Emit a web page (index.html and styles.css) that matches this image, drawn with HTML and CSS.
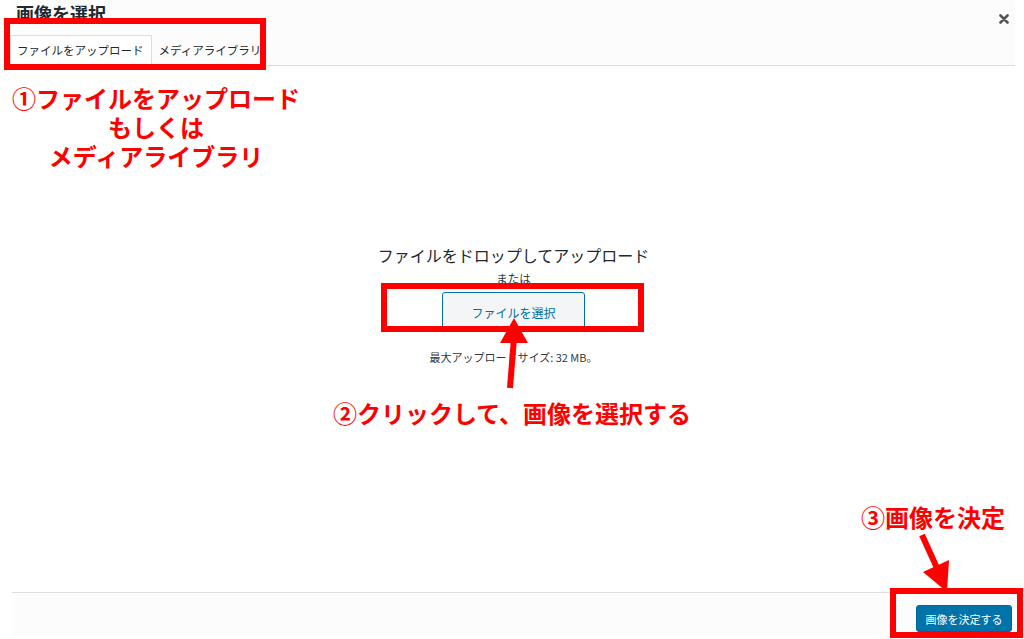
FILE: index.html
```html
<!DOCTYPE html>
<html lang="ja">
<head>
<meta charset="utf-8">
<title>画像を選択</title>
<link rel="stylesheet" href="styles.css">
</head>
<body>
<div class="modal">
  <header class="modal-header">
    <div class="title-row">
      <h1 class="title">画像を選択</h1>
      <button class="close" aria-label="閉じる">
        <svg width="10" height="10" viewBox="0 0 10 10"><path d="M1.5 1.5 L8.5 8.5 M8.5 1.5 L1.5 8.5" stroke="#555" stroke-width="2.6" stroke-linecap="round"/></svg>
      </button>
    </div>
    <nav class="tabs">
      <span class="tab active">ファイルをアップロード</span>
      <span class="tab">メディアライブラリ</span>
    </nav>
  </header>
  <main class="modal-body">
    <div class="uploader">
      <p class="drop">ファイルをドロップしてアップロード</p>
      <p class="or">または</p>
      <button class="select-btn">ファイルを選択</button>
      <p class="max">最大アップロードサイズ: 32 MB。</p>
    </div>
  </main>
  <footer class="modal-footer">
    <button class="primary">画像を決定する</button>
  </footer>
</div>

<div class="note note1">
  <div class="note-line">①ファイルをアップロード</div>
  <div class="note-line">もしくは</div>
  <div class="note-line">メディアライブラリ</div>
</div>
<div class="note note2">②クリックして、画像を選択する</div>
<div class="note note3">③画像を決定</div>

<div class="box box1"></div>
<div class="box box2"></div>
<div class="box box3"></div>

<svg class="arrows" width="1024" height="639" viewBox="0 0 1024 639">
  <path d="M510 388 L514 338" stroke="#f00" stroke-width="6"/>
  <polygon points="514,318 528,343 500,343" fill="#f00"/>
  <path d="M922 535 L937 568" stroke="#f00" stroke-width="6"/>
  <polygon points="947,592 949,560 923,572" fill="#f00"/>
</svg>
</body>
</html>
```

FILE: styles.css
```css
* { box-sizing: border-box; }
html, body { margin: 0; padding: 0; }
body {
  width: 1024px;
  height: 639px;
  background: #fff;
  font-family: "Noto Sans CJK JP", "Noto Sans", sans-serif;
  color: #32373c;
  position: relative;
  overflow: hidden;
}
.modal {
  margin-left: 12px;
  width: 1003px;
  height: 635px;
  display: flex;
  flex-direction: column;
  background: #fff;
}
.modal-header {
  background: #fcfcfc;
  border-bottom: 1px solid #dddddd;
  height: 66px;
  display: flex;
  flex-direction: column;
}
.title-row {
  display: flex;
  justify-content: space-between;
  align-items: flex-start;
  height: 35px;
}
.title {
  margin: 0;
  padding-left: 4px;
  font-size: 18px;
  line-height: 26px;
  font-weight: bold;
  color: #23282d;
}
.close {
  border: 0;
  background: none;
  padding: 0;
  margin: 14px 6px 0 0;
  width: 10px;
  height: 10px;
  display: flex;
}
.tabs {
  display: flex;
  align-items: flex-end;
  height: 30px;
}
.tab {
  font-size: 11.5px;
  line-height: 28px;
  height: 30px;
  padding: 0 6px;
  color: #23282d;
  border: 1px solid transparent;
  border-bottom: 0;
  white-space: nowrap;
}
.tab.active {
  background: #fff;
  border-color: #dddddd;
  margin-left: -2px;
  padding: 0 7px 0 6px;
}
.modal-body {
  flex: 1;
  background: #fff;
}
.uploader {
  display: flex;
  flex-direction: column;
  align-items: center;
  padding-top: 177px;
}
.uploader p { margin: 0; }
.drop {
  font-size: 16px;
  line-height: 24px;
  color: #23282d;
}
.or {
  font-size: 11.5px;
  line-height: 16px;
  margin-top: 3px !important;
  color: #32373c;
}
.select-btn {
  margin-top: 6px;
  width: 143px;
  height: 40px;
  background: #f3f5f6;
  border: 1px solid #0071a1;
  border-radius: 3px;
  color: #0071a1;
  font-family: inherit;
  font-size: 12px;
}
.max {
  margin-top: 17px !important;
  font-size: 11px;
  line-height: 16px;
  color: #32373c;
}
.modal-footer {
  height: 43px;
  background: #fcfcfc;
  border-top: 1px solid #dddddd;
  display: flex;
  justify-content: flex-end;
  align-items: flex-start;
  padding: 12px 3px 0 0;
}
.primary {
  width: 96px;
  height: 27px;
  background: #0073aa;
  border: 1px solid #006799;
  border-radius: 3px;
  color: #fff;
  font-family: inherit;
  font-size: 11px;
  padding: 0;
}
.note {
  position: absolute;
  color: #ff0000;
  font-weight: bold;
  font-size: 24px;
  line-height: 29px;
  white-space: nowrap;
  text-align: center;
}
.note-line { height: 29px; }
.note1 { left: 10px; top: 83px; width: 292px; }
.note2 { left: 333px; top: 398px; }
.note3 { left: 861px; top: 502px; }
.box {
  position: absolute;
  border: 6px solid #ff0000;
}
.box1 { left: 4px; top: 18px; width: 262px; height: 52px; }
.box2 { left: 381px; top: 283px; width: 263px; height: 49px; }
.box3 { left: 890px; top: 588px; width: 133px; height: 50px; }
.arrows { position: absolute; left: 0; top: 0; }
```
